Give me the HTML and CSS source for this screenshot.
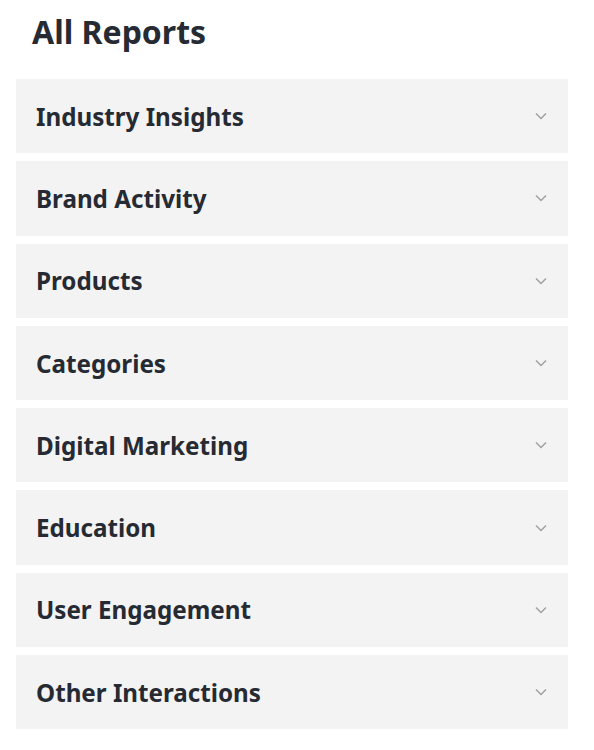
FILE: index.html
```html
<!DOCTYPE html>
<html lang="en">
<head>
    <meta charset="UTF-8">
    <meta name="viewport" content="width=device-width, initial-scale=1.0">
    <title>All Reports</title>
    <link rel="stylesheet" href="styles.css">
</head>
<body>

    <div class="container">
        <h2>All Reports</h2>

        <div class="report-list">
            <div class="report">
                <span>Industry Insights</span>
                <svg class="chevron" viewBox="0 0 12 8"><path d="M1 1.5l5 5 5-5"/></svg>
            </div>
            <div class="report">
                <span>Brand Activity</span>
                <svg class="chevron" viewBox="0 0 12 8"><path d="M1 1.5l5 5 5-5"/></svg>
            </div>
            <div class="report">
                <span>Products</span>
                <svg class="chevron" viewBox="0 0 12 8"><path d="M1 1.5l5 5 5-5"/></svg>
            </div>
            <div class="report">
                <span>Categories</span>
                <svg class="chevron" viewBox="0 0 12 8"><path d="M1 1.5l5 5 5-5"/></svg>
            </div>
            <div class="report">
                <span>Digital Marketing</span>
                <svg class="chevron" viewBox="0 0 12 8"><path d="M1 1.5l5 5 5-5"/></svg>
            </div>
            <div class="report">
                <span>Education</span>
                <svg class="chevron" viewBox="0 0 12 8"><path d="M1 1.5l5 5 5-5"/></svg>
            </div>
            <div class="report">
                <span>User Engagement</span>
                <svg class="chevron" viewBox="0 0 12 8"><path d="M1 1.5l5 5 5-5"/></svg>
            </div>
            <div class="report">
                <span>Other Interactions</span>
                <svg class="chevron" viewBox="0 0 12 8"><path d="M1 1.5l5 5 5-5"/></svg>
            </div>
        </div>
    </div>

</body>
</html>
```

FILE: styles.css
```css
body {
    font-family: "Noto Sans", "Open Sans", Arial, sans-serif;
    color: #262a33;
    margin: 0;
    background: #fff;
}

.container {
    width: 552px;
    padding: 0 16px;
}

h2 {
    font-size: 32px;
    font-weight: 700;
    line-height: 40px;
    margin: 12px 0 0 16px;
    height: 67px;
}

.report-list {
    display: flex;
    flex-direction: column;
    gap: 8px;
}

.report {
    display: flex;
    align-items: center;
    justify-content: space-between;
    height: 74.3px;
    padding: 0 21px 0 20px;
    background-color: #f3f3f3;
    font-size: 24.2px;
    font-weight: 700;
}

.chevron {
    width: 12px;
    height: 8px;
    fill: none;
    stroke: #a0a0a0;
    stroke-width: 1.5;
}
```
